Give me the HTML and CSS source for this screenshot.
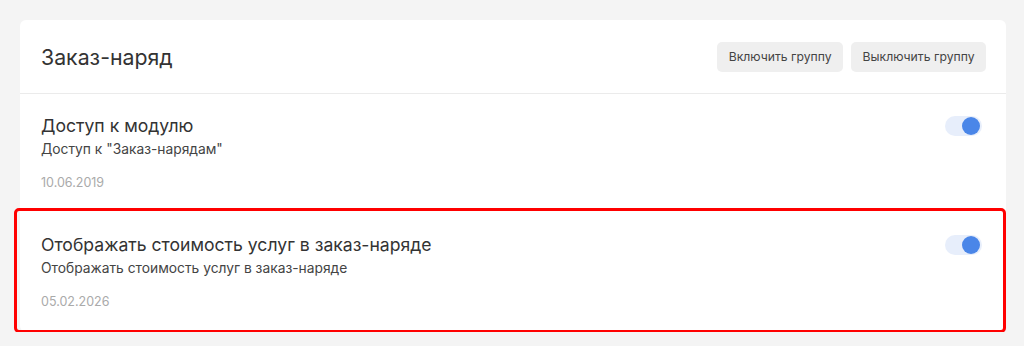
FILE: index.html
```html
<!DOCTYPE html>
<html lang="ru">
<head>
    <meta charset="UTF-8">
    <title>Заказ-наряд</title>
    <link rel="stylesheet" href="styles.css">
</head>
<body>
    <div class="card">
        <div class="cardHeader">
            <div class="cardTitle">Заказ-наряд</div>
            <div class="headerButtons">
                <button class="btn">Включить группу</button>
                <button class="btn">Выключить группу</button>
            </div>
        </div>
        <div class="setting">
            <div class="settingText">
                <div class="settingTitle">Доступ к модулю</div>
                <div class="settingDesc">Доступ к "Заказ-нарядам"</div>
                <div class="settingDate">10.06.2019</div>
            </div>
            <div class="toggle on"><span class="knob"></span></div>
        </div>
        <div class="setting highlighted">
            <div class="settingText">
                <div class="settingTitle">Отображать стоимость услуг в заказ-наряде</div>
                <div class="settingDesc">Отображать стоимость услуг в заказ-наряде</div>
                <div class="settingDate">05.02.2026</div>
            </div>
            <div class="toggle on"><span class="knob"></span></div>
        </div>
    </div>
</body>
</html>
```
FILE: styles.css
```css
body {
    margin: 0;
    padding: 20px 18px 0 20px;
    background: #f4f4f4;
    font-family: Inter, "Noto Sans", sans-serif;
    color: #333;
}
.card {
    background: #fff;
    border-radius: 6px;
    position: relative;
}
.cardHeader {
    display: flex;
    align-items: center;
    justify-content: space-between;
    height: 73px;
    padding: 0 20px 0 21px;
    border-bottom: 1px solid #ebebeb;
}
.cardTitle {
    font-size: 21.3px;
    color: #333;
}
.headerButtons {
    display: flex;
    gap: 8px;
}
.btn {
    font-family: inherit;
    font-size: 12.2px;
    color: #444;
    background: #efefef;
    border: none;
    border-radius: 5px;
    height: 30px;
    padding: 0 11.5px;
}
.setting {
    display: flex;
    justify-content: space-between;
    align-items: flex-start;
    padding: 21px 24px 21px 21px;
    position: relative;
}
.settingTitle {
    font-size: 17.6px;
    line-height: 22px;
    color: #333;
}
.settingDesc {
    font-size: 13.8px;
    line-height: 20px;
    margin-top: 2px;
    color: #444;
}
.settingDate {
    font-size: 12.5px;
    line-height: 18px;
    margin-top: 15px;
    color: #aaa;
}
.toggle {
    width: 37px;
    height: 20px;
    border-radius: 10px;
    background: #e7eefb;
    margin-top: 1px;
    position: relative;
}
.knob {
    position: absolute;
    right: 2px;
    top: 1px;
    width: 18px;
    height: 18px;
    border-radius: 50%;
    background: #4a86e8;
}
/* red highlight frame over the row */
.highlighted::after {
    content: "";
    position: absolute;
    left: -6px;
    top: -5px;
    right: 0;
    bottom: -1px;
    border: 3.5px solid #f00;
    border-radius: 5px;
}
```
